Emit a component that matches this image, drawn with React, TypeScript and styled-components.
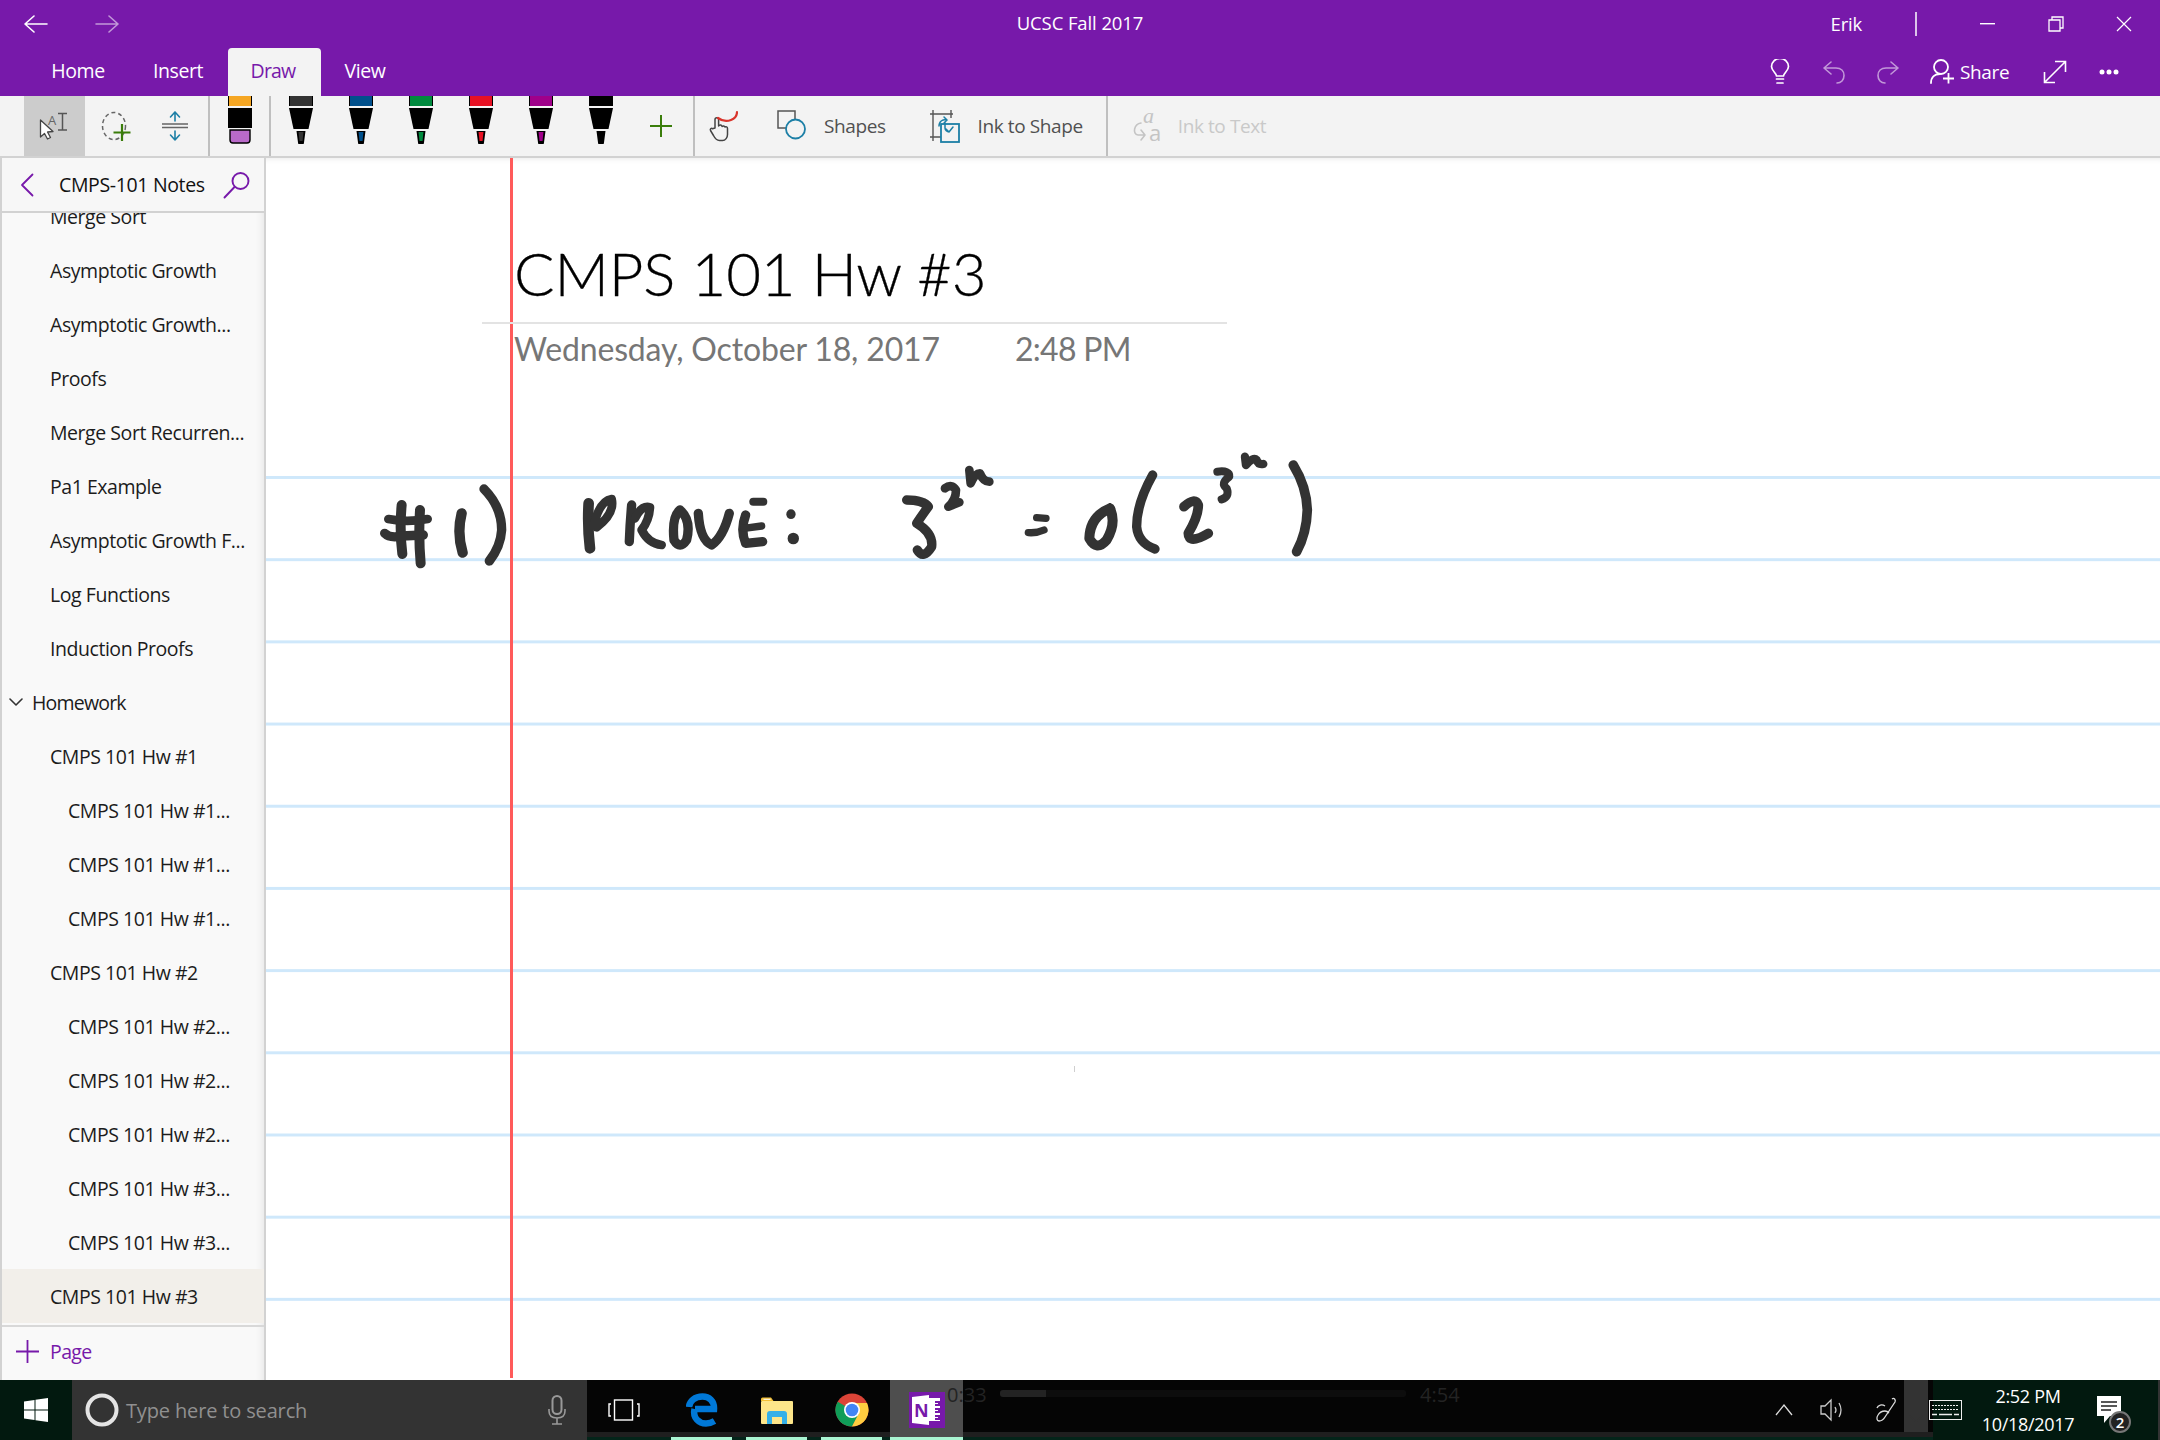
import React from "react";
import styled, { createGlobalStyle } from "styled-components";

const PURPLE = "#7719aa";
const TEAL = "#1c7fa6";
const GREEN = "#3a7d0a";
const UI_FONT = '"Open Sans", "Noto Sans", sans-serif';

const GlobalStyle = createGlobalStyle`
  html, body {
    margin: 0;
    width: 2160px;
    height: 1440px;
    overflow: hidden;
    background: #fff;
    font-family: ${UI_FONT};
  }
`;

const Page = styled.div`
  display: flex;
  flex-direction: column;
  width: 2160px;
  height: 1440px;
`;

/* ---------- title bar ---------- */

const TitleBar = styled.header`
  display: grid;
  grid-template-columns: 1fr auto 1fr;
  align-items: center;
  height: 48px;
  background: ${PURPLE};
  color: #fff;
`;

const NavArrows = styled.div`
  display: flex;
  align-items: center;
  gap: 47px;
  padding-left: 24px;
`;

const WindowTitle = styled.div`
  padding-bottom: 3px;
  font-size: 18.5px;
  letter-spacing: -0.1px;
`;

const WindowControls = styled.div`
  display: flex;
  align-items: center;
  justify-content: flex-end;
  padding-right: 2px;
`;

const UserName = styled.span`
  padding-bottom: 1px;
  font-size: 18.5px;
  letter-spacing: -0.2px;
  margin-right: 53px;
`;

const UserDivider = styled.span`
  width: 2px;
  height: 24px;
  background: #dcc4ea;
  margin-right: 37px;
`;

const CaptionButton = styled.div`
  display: flex;
  align-items: center;
  justify-content: center;
  width: 68px;
  height: 48px;
`;

/* ---------- ribbon tabs ---------- */

const TabRow = styled.nav`
  display: flex;
  justify-content: space-between;
  height: 48px;
  background: ${PURPLE};
  padding: 0 24px 0 28px;
`;

const Tabs = styled.div`
  display: flex;
`;

const Tab = styled.div<{ $active?: boolean; $width: number }>`
  display: flex;
  align-items: center;
  justify-content: center;
  box-sizing: border-box;
  width: ${(p) => p.$width}px;
  padding: 0 ${(p) => (p.$active ? 3 : 0)}px 3px 0;
  font-size: 19.5px;
  letter-spacing: ${(p) => (p.$active ? -0.8 : -0.45)}px;
  border-radius: 4px 4px 0 0;
  color: ${(p) => (p.$active ? PURPLE : "#fff")};
  background: ${(p) => (p.$active ? "#f3f3f3" : "transparent")};
`;

const TabActions = styled.div`
  display: flex;
  align-items: center;
`;

const ActionSlot = styled.div<{ $dim?: boolean }>`
  display: flex;
  align-items: center;
  justify-content: center;
  width: 54px;
  height: 48px;
  opacity: ${(p) => (p.$dim ? 0.55 : 1)};
`;

const ShareButton = styled.div`
  display: flex;
  align-items: center;
  gap: 4px;
  width: 113px;
  padding-left: 15px;
  padding-bottom: 1px;
  box-sizing: border-box;
  color: #fff;
  font-size: 19px;
  letter-spacing: -0.35px;
`;

/* ---------- draw toolbar ---------- */

const Toolbar = styled.div`
  display: flex;
  align-items: stretch;
  box-sizing: border-box;
  height: 62px;
  padding-left: 24px;
  background: #f3f3f3;
  border-bottom: 2px solid #d2d2d2;
`;

const ToolButton = styled.div<{ $selected?: boolean; $width?: number }>`
  display: flex;
  align-items: center;
  justify-content: center;
  width: ${(p) => p.$width ?? 60}px;
  background: ${(p) => (p.$selected ? "#cccccc" : "transparent")};
`;

const ToolSeparator = styled.div<{ $before?: number }>`
  width: 2px;
  margin-left: ${(p) => p.$before ?? 0}px;
  background: #bfbfbf;
`;

const PenSlot = styled.div<{ $width?: number }>`
  display: flex;
  justify-content: center;
  width: ${(p) => p.$width ?? 60}px;
`;

const LabelledTool = styled.div<{ $disabled?: boolean; $before: number; $gap: number }>`
  display: flex;
  align-items: center;
  gap: ${(p) => p.$gap}px;
  margin-left: ${(p) => p.$before}px;
  font-size: 19px;
  letter-spacing: -0.4px;
  color: ${(p) => (p.$disabled ? "#c9c9c9" : "#505050")};
`;

/* ---------- body ---------- */

const Body = styled.div`
  display: flex;
  flex: 1;
  min-height: 0;
`;

const Sidebar = styled.aside`
  display: flex;
  flex-direction: column;
  box-sizing: border-box;
  width: 266px;
  background: #f9f9f9;
  border-left: 2px solid #d2d2d2;
  border-right: 2px solid #d2d2d2;
  box-shadow: inset -8px 0 8px -8px #dedede;
`;

const SidebarHeader = styled.div`
  display: flex;
  align-items: center;
  flex: none;
  box-sizing: border-box;
  height: 55px;
  padding: 0 0 0 18px;
  background: #f7f7f7;
  border-bottom: 2px solid #d2d2d2;
`;

const NotebookName = styled.div`
  margin-left: 25px;
  width: 164px;
  font-size: 19.5px;
  letter-spacing: -0.35px;
  color: #111;
  white-space: nowrap;
`;

const PageList = styled.div`
  flex: 1;
  min-height: 0;
  overflow: hidden;
`;

const PageRows = styled.div`
  margin-top: -24px;
`;

const PageRow = styled.div<{ $level: number; $active?: boolean }>`
  display: flex;
  align-items: center;
  height: 54px;
  padding-left: ${(p) => [7, 48, 66][p.$level]}px;
  font-size: 19.5px;
  letter-spacing: -0.45px;
  color: #1c1c1c;
  white-space: nowrap;
  background: ${(p) => (p.$active ? "#f2efea" : "transparent")};
`;

const SectionLabel = styled.span`
  margin-left: 9px;
  letter-spacing: -0.8px;
`;

const SidebarFooter = styled.div`
  display: flex;
  align-items: center;
  flex: none;
  gap: 11px;
  box-sizing: border-box;
  height: 55px;
  padding: 0 0 4px 14px;
  border-top: 2px solid #d8d8d8;
  color: ${PURPLE};
  font-size: 19.5px;
  letter-spacing: -0.6px;
`;

/* ---------- note canvas ---------- */

const Canvas = styled.main`
  position: relative;
  display: flex;
  flex-direction: column;
  flex: 1;
  min-width: 0;
  padding-bottom: 2px;
  background: #fff;
  box-shadow: inset 0 6px 6px -6px #e4e4e4;
`;

const TitleArea = styled.div`
  flex: none;
  box-sizing: border-box;
  height: 318px;
  padding: 73px 0 0 216px;
`;

const NoteTitle = styled.h1`
  margin: 0;
  height: 93px;
  box-sizing: border-box;
  width: 745px;
  padding: 6px 0 0 32px;
  border-bottom: 2px solid #e3e3e3;
  position: relative;
  z-index: 2;
  font-family: Lato, sans-serif;
  font-weight: 300;
  font-size: 60px;
  line-height: 72px;
  letter-spacing: -0.12px;
  -webkit-text-stroke: 0.3px #000;
  color: #000;
`;

const NoteStamp = styled.div`
  display: flex;
  gap: 75px;
  padding: 2px 0 0 32px;
  font-family: Lato, sans-serif;
  font-size: 32px;
  line-height: 46px;
  letter-spacing: -0.15px;
  color: #767676;
`;

const StampTime = styled.span`
  letter-spacing: -0.7px;
`;

const Ruled = styled.div`
  flex: 1;
  background-image: linear-gradient(to bottom, #cfe8fb 0, #cfe8fb 3px, transparent 3px);
  background-size: 100% 82.2px;
`;

const MarginLine = styled.div`
  position: absolute;
  left: 244px;
  top: 0;
  bottom: 2px;
  width: 3px;
  background: #ff5a5a;
`;

const InkLayer = styled.svg`
  position: absolute;
  left: 104px;
  top: 292px;
  overflow: visible;
`;

const Speck = styled.div`
  position: absolute;
  left: 808px;
  top: 908px;
  width: 1px;
  height: 6px;
  background: #cfcfcf;
`;

/* ---------- taskbar ---------- */

const Taskbar = styled.footer`
  position: relative;
  display: flex;
  flex: none;
  height: 60px;
  background: linear-gradient(to bottom, #050505 0, #050505 52px, #1f1f1f 52px, #1f1f1f 57px, #04251a 57px);
`;

const StartButton = styled.div`
  display: flex;
  align-items: center;
  justify-content: center;
  width: 72px;
  background: #02190f;
`;

const SearchBox = styled.div`
  display: flex;
  align-items: center;
  box-sizing: border-box;
  width: 515px;
  padding-left: 13px;
  background: #333;
  color: #909090;
  font-size: 20px;
  letter-spacing: -0.15px;
`;

const SearchHint = styled.span`
  margin-left: 7px;
  flex: 1;
`;

const MicSlot = styled.div`
  display: flex;
  margin-right: 21px;
`;

const TaskSlot = styled.div<{ $width: number; $before?: number; $running?: boolean; $focused?: boolean }>`
  position: relative;
  display: flex;
  align-items: center;
  justify-content: center;
  width: ${(p) => p.$width}px;
  margin-left: ${(p) => p.$before ?? 0}px;
  background: ${(p) => (p.$focused ? "#4e4e4e" : "transparent")};

  &::after {
    content: "";
    display: ${(p) => (p.$running ? "block" : "none")};
    position: absolute;
    left: 0;
    right: 0;
    bottom: 0;
    height: 3px;
    background: #a9f5d2;
  }
`;

const GhostTime = styled.span<{ $left: number }>`
  position: absolute;
  left: ${(p) => p.$left}px;
  top: 1px;
  font-size: 20px;
  color: #232323;
`;

const GhostProgress = styled.div`
  position: absolute;
  left: 1000px;
  top: 10px;
  width: 406px;
  height: 7px;
  border-radius: 3px;
  background: linear-gradient(to right, #232323 46px, #0d0d0d 46px);
`;

const Tray = styled.div`
  display: flex;
  align-items: stretch;
  margin-left: auto;
`;

const TraySlot = styled.div<{ $width: number; $shift?: number }>`
  display: flex;
  align-items: center;
  justify-content: center;
  box-sizing: border-box;
  width: ${(p) => p.$width}px;
  padding-left: ${(p) => p.$shift ?? 0}px;
`;

const TrayOverflow = styled.div`
  display: flex;
  align-items: flex-end;
  justify-content: center;
  box-sizing: border-box;
  width: 24px;
  height: 52px;
  padding-bottom: 8px;
  margin-right: 5px;
  background: #333;
`;

const SystemArea = styled.div`
  display: flex;
  align-items: center;
  box-sizing: border-box;
  width: 227px;
  background: #02190f;
  border-right: 2px solid #333;
`;

const KeyboardSlot = styled.div`
  display: flex;
  margin-left: -4px;
`;

const Clock = styled.div`
  display: flex;
  flex-direction: column;
  align-items: center;
  width: 136px;
  margin-left: -2px;
  font-size: 18px;
  line-height: 28px;
  letter-spacing: -0.3px;
  color: #fff;
`;

const Badge = styled.span`
  position: absolute;
  right: 29px;
  bottom: 7px;
  display: flex;
  align-items: center;
  justify-content: center;
  width: 22px;
  height: 22px;
  border-radius: 50%;
  box-sizing: border-box;
  border: 2px solid #777;
  background: #222;
  color: #fff;
  font-size: 15px;
  font-weight: 600;
`;

/* ---------- icons ---------- */

const Line = { fill: "none", strokeLinecap: "round", strokeLinejoin: "round" } as const;

const ArrowLeft = ({ dim }: { dim?: boolean }) => (
  <svg width="24" height="20" viewBox="0 0 24 20" opacity={dim ? 0.55 : 1}>
    {dim ? (
      <path d="M1 10H23M14 2l9 8-9 8" {...Line} stroke="#fff" strokeWidth="1.6" />
    ) : (
      <path d="M23 10H1M10 2l-9 8 9 8" {...Line} stroke="#fff" strokeWidth="1.6" />
    )}
  </svg>
);

const Minimize = () => (
  <svg width="16" height="2" viewBox="0 0 16 2">
    <rect width="15" height="1.4" fill="#fff" />
  </svg>
);

const Restore = () => (
  <svg width="16" height="16" viewBox="0 0 16 16">
    <path d="M4 4V1h11v11h-3M1 4h11v11H1z" fill="none" stroke="#fff" strokeWidth="1.3" />
  </svg>
);

const Close = () => (
  <svg width="16" height="16" viewBox="0 0 16 16">
    <path d="M1 1l14 14M15 1L1 15" fill="none" stroke="#fff" strokeWidth="1.2" />
  </svg>
);

const Bulb = () => (
  <svg width="20" height="26" viewBox="0 0 20 26">
    <path d="M6.5 17c0-3-5-5-5-9.500A8.500 8 0 0 1 18.500 7.500C18.500 12 13.500 14 13.500 17z" {...Line} stroke="#fff" strokeWidth="1.7" />
    <path d="M6.500 20h7M7 24h6" {...Line} stroke="#fff" strokeWidth="1.7" />
  </svg>
);

const Undo = () => (
  <svg width="24" height="24" viewBox="0 0 24 24">
    <path d="M9 2L2 8l7 6M2 8h12c5 0 8 3 8 7.500S19 23 15 23" {...Line} stroke="#fff" strokeWidth="1.6" />
  </svg>
);

const Redo = () => (
  <svg width="24" height="24" viewBox="0 0 24 24">
    <path d="M15 2l7 6-7 6M22 8H10c-5 0-8 3-8 7.500S5 23 9 23" {...Line} stroke="#fff" strokeWidth="1.6" />
  </svg>
);

const SharePerson = () => (
  <svg width="26" height="25" viewBox="0 0 26 25">
    <circle cx="11" cy="8" r="7" fill="none" stroke="#fff" strokeWidth="1.8" />
    <path d="M1 24c0-6 4-9 9-9" {...Line} stroke="#fff" strokeWidth="1.8" />
    <path d="M13 19.500h11M18.500 14v10.500" fill="none" stroke="#fff" strokeWidth="1.8" />
  </svg>
);

const Expand = () => (
  <svg width="24" height="24" viewBox="0 0 24 24">
    <path d="M1.500 22.500L22.500 1.500M12 1.500h10.500V12M1.500 12v10.500H12" fill="none" stroke="#fff" strokeWidth="1.6" />
  </svg>
);

const Dots = () => (
  <svg width="20" height="6" viewBox="0 0 20 6">
    <circle cx="3" cy="3" r="2.500" fill="#fff" />
    <circle cx="10" cy="3" r="2.500" fill="#fff" />
    <circle cx="17" cy="3" r="2.500" fill="#fff" />
  </svg>
);

const SelectTool = () => (
  <svg width="61" height="60" viewBox="0 0 61 60">
    <text x="24" y="29" fontFamily="Open Sans, sans-serif" fontSize="13" fill="#666">A</text>
    <path d="M16.500 24v17l4-3.500 3 5.500 3-1.500-3-5.500 5.500-.5z" fill="#fff" stroke="#444" strokeWidth="1.3" strokeLinejoin="round" />
    <path d="M34 17.500h9M38.500 17.500v16.500M34 34h9" fill="none" stroke="#555" strokeWidth="1.500" />
  </svg>
);

const LassoAdd = () => (
  <svg width="60" height="60" viewBox="0 0 60 60">
    <ellipse cx="29" cy="30" rx="11.500" ry="13.500" fill="none" stroke="#666" strokeWidth="1.500" strokeDasharray="4 3" />
    <path d="M37 28v17M28.500 36.500h17" stroke={GREEN} strokeWidth="2.200" />
  </svg>
);

const InsertSpace = () => (
  <svg width="60" height="60" viewBox="0 0 60 60">
    <path d="M17 28h26M17 31.500h26" stroke="#666" strokeWidth="1.600" />
    <path d="M30 25V16M25.500 21l4.500-5 4.500 5M30 35v9M25.500 39l4.500 5 4.500-5" {...Line} stroke={TEAL} strokeWidth="1.600" />
  </svg>
);

const HighlighterPen = () => (
  <svg width="24" height="48" viewBox="0 0 24 48">
    <rect width="24" height="10" fill="#000" />
    <rect x="1" width="22" height="10" fill="#f5a623" />
    <rect y="12" width="24" height="20" fill="#000" />
    <path d="M2 34h20v10a3 3 0 0 1-3 3H5a3 3 0 0 1-3-3z" fill="#b96ac9" stroke="#000" strokeWidth="1.400" />
  </svg>
);

const Pen = ({ color }: { color: string }) => (
  <svg width="24" height="48" viewBox="0 0 24 48">
    <rect width="24" height="10" fill="#000" />
    <rect x="1" width="22" height="10" fill={color} />
    <path d="M0 12h24l-4.500 21h-15z" fill="#000" />
    <path d="M7.500 35h9l-1.500 11.500a3 2.500 0 0 1-6 0z" fill="#000" />
    <path d="M9.500 36h5l-1 9h-3z" fill={color} />
  </svg>
);

const PlusIcon = ({ color, size, weight = 2 }: { color: string; size: number; weight?: number }) => (
  <svg width={size} height={size} viewBox={`0 0 ${size} ${size}`}>
    <path d={`M${size / 2} 0V${size}M0 ${size / 2}H${size}`} stroke={color} strokeWidth={weight} />
  </svg>
);

const TouchInk = () => (
  <svg width="36" height="32" viewBox="0 0 36 32">
    <path d="M13 18V9.500a1.800 1.800 0 0 1 3.600 0V16l.5-.5a1.700 1.700 0 0 1 2.800.5l.2.500a1.700 1.700 0 0 1 2.800.5 1.700 1.700 0 0 1 2.600 1.500v6c0 3-2 6-5 6h-3c-3 0-4.500-2-6-5l-3-5c-.8-1.600 1-2.800 2-1.800z" {...Line} stroke="#444" strokeWidth="1.500" />
    <path d="M16 8c4 3 9 3.500 13 2 4-1.500 6-4 6-8" {...Line} stroke="#d9342b" strokeWidth="2.200" />
  </svg>
);

const ShapesIcon = () => (
  <svg width="30" height="32" viewBox="0 0 30 32">
    <path d="M9 18H1V1h17v8" fill="none" stroke="#555" strokeWidth="1.500" />
    <circle cx="18.500" cy="19" r="9.500" fill="#f3f3f3" stroke={TEAL} strokeWidth="1.800" />
  </svg>
);

const InkToShapeIcon = () => (
  <svg width="30" height="34" viewBox="0 0 30 34">
    <path d="M0 5h23M0 28h11M3 1v31M21 1v8" fill="none" stroke="#555" strokeWidth="1.400" />
    <rect x="11" y="15" width="18" height="18" fill="#f3f3f3" stroke={TEAL} strokeWidth="1.800" />
    <path d="M9 17c0-5 4-7 8-6M14 8l3 3-3 3M15 14v5c0 2 2 4 4 4M23 18l-4 5-3-3" {...Line} stroke={TEAL} strokeWidth="1.500" />
  </svg>
);

const InkToTextIcon = () => (
  <svg width="34" height="40" viewBox="0 0 34 40">
    <text x="15" y="17" fontFamily="Liberation Serif, serif" fontStyle="italic" fontSize="22" fill="#c4c4c4">a</text>
    <text x="21" y="35" fontFamily="Open Sans, sans-serif" fontSize="22" fill="#c4c4c4">a</text>
    <path d="M13 17C6 18 4 28 10 29H17M13 24l4 5-4 5" {...Line} stroke="#c4c4c4" strokeWidth="1.600" />
  </svg>
);

const BackChevron = () => (
  <svg width="14" height="24" viewBox="0 0 14 24">
    <path d="M12.500 1.500L2 12l10.500 10.500" {...Line} stroke={PURPLE} strokeWidth="1.800" />
  </svg>
);

const SearchGlass = () => (
  <svg width="28" height="28" viewBox="0 0 28 28">
    <circle cx="17.500" cy="10" r="8" fill="none" stroke={PURPLE} strokeWidth="1.900" />
    <path d="M11.500 16L1.500 26.500" {...Line} stroke={PURPLE} strokeWidth="1.900" />
  </svg>
);

const DownChevron = () => (
  <svg width="14" height="9" viewBox="0 0 14 9">
    <path d="M1 1l6 6 6-6" {...Line} stroke="#333" strokeWidth="1.600" />
  </svg>
);

const HandwrittenNote = () => (
  <InkLayer width="970" height="130" viewBox="370 450 970 130">
    <g transform="translate(370 450) scale(0.3333)" {...Line} stroke="#333" strokeWidth="30">
      <path d="M95 165Q88 240 97 312" />
      <path d="M150 180Q145 260 152 340" />
      <path d="M55 207Q110 218 173 207" strokeWidth="26" />
      <path d="M44 250Q60 266 95 258L160 255" strokeWidth="28" />
      <path d="M275 190Q260 250 278 308" strokeWidth="31" />
      <path d="M342 117Q395 170 395 240Q392 290 358 333" strokeWidth="28" />
      <path d="M656 160Q652 230 660 295" strokeWidth="32" />
      <path d="M672 222Q690 152 725 147Q735 190 680 232" strokeWidth="26" />
      <path d="M785 165Q780 220 778 275" strokeWidth="28" />
      <path d="M795 205Q815 165 840 172Q838 210 815 240Q835 280 875 285" strokeWidth="26" />
      <path d="M930 180Q905 200 912 270Q930 300 950 270Q965 210 930 180" strokeWidth="28" />
      <path d="M985 190Q990 270 1025 285Q1060 260 1078 190" strokeWidth="28" />
      <path d="M1150 155L1180 155" strokeWidth="24" />
      <path d="M1127 195Q1110 240 1127 280L1178 275" strokeWidth="28" />
      <path d="M1122 235L1175 228" strokeWidth="22" />
      <path d="M1263 192L1263 193" strokeWidth="28" />
      <path d="M1270 265L1270 266" strokeWidth="34" />
    </g>
    <g transform="translate(880 450) scale(0.3333)" {...Line} stroke="#333" strokeWidth="28">
      <path d="M80 150Q130 150 145 170Q130 190 110 220Q160 250 155 290Q130 330 112 300" />
      <path d="M195 115Q215 100 228 120Q228 150 205 170L238 157" strokeWidth="26" />
      <path d="M268 60L272 100Q285 70 300 70Q310 95 328 95" strokeWidth="26" />
      <path d="M470 203L498 205" strokeWidth="22" />
      <path d="M445 248Q470 250 492 240" strokeWidth="22" />
      <path d="M690 175Q630 200 628 265Q650 305 680 270Q710 220 690 175" strokeWidth="30" />
      <path d="M818 75Q770 160 770 230Q775 280 825 297" strokeWidth="28" />
      <path d="M912 170Q945 140 955 165Q955 200 925 250Q925 285 985 250" strokeWidth="29" />
      <path d="M1012 65Q1050 60 1048 80Q1020 100 1040 115Q1050 140 1025 148" strokeWidth="24" />
      <path d="M1095 20L1098 45Q1120 20 1130 30Q1135 45 1150 42" strokeWidth="25" />
      <path d="M1240 45Q1280 110 1282 180Q1280 250 1250 305" strokeWidth="29" />
    </g>
  </InkLayer>
);

const WindowsLogo = () => (
  <svg width="24" height="24" viewBox="0 0 24 24">
    <path d="M0 3.500L10.500 2v9.500H0zM11.500 1.800L24 0v11.500H11.500zM0 12.500h10.500V22L0 20.500zM11.500 12.500H24V24l-12.500-1.800z" fill="#fff" />
  </svg>
);

const CortanaRing = () => (
  <svg width="34" height="34" viewBox="0 0 34 34">
    <circle cx="17" cy="17" r="14.500" fill="none" stroke="#e4e4e4" strokeWidth="4" />
  </svg>
);

const Mic = () => (
  <svg width="18" height="30" viewBox="0 0 18 30">
    <rect x="4.500" y="1" width="9" height="18" rx="4.500" fill="none" stroke="#999" strokeWidth="2" />
    <path d="M1 14v2c0 5 3 7 8 7s8-2 8-7v-2M9 23v6M4 29h10" fill="none" stroke="#999" strokeWidth="1.600" />
  </svg>
);

const TaskView = () => (
  <svg width="32" height="22" viewBox="0 0 32 22">
    <rect x="6.500" y="1" width="18" height="20" fill="none" stroke="#fff" strokeWidth="1.400" />
    <path d="M3 5H1v12h2M29 5h2v12h-2" fill="none" stroke="#fff" strokeWidth="1.400" />
  </svg>
);

const EdgeLogo = () => (
  <svg width="32" height="34" viewBox="0 0 32 34">
    <path d="M9 16H28C28.500 8 23 3.500 16.500 3.500C9 3.500 3.500 8 3 14" fill="none" stroke="#0078d7" strokeWidth="6.500" />
    <path d="M8.500 16C6.500 25 13 30.500 20 30.500C23.500 30.500 26 29.500 28.500 28" fill="none" stroke="#0078d7" strokeWidth="6.500" />
  </svg>
);

const FolderLogo = () => (
  <svg width="32" height="27" viewBox="0 0 32 27">
    <path d="M0 2a1.500 1.500 0 0 1 1.500-1.500H10L12.500 4H0z" fill="#f2c037" />
    <rect x="2.500" y="1.800" width="7" height="1" fill="#fff" />
    <rect y="4" width="32" height="23" rx="1" fill="#fde68a" />
    <path d="M6 27V17a3 3 0 0 1 3-3h14a3 3 0 0 1 3 3v10h-5v-7h-10v7z" fill="#35b0e8" />
  </svg>
);

const ChromeLogo = () => (
  <svg width="34" height="34" viewBox="0 0 34 34">
    <circle cx="17" cy="17" r="16.500" fill="#db4437" />
    <path d="M17 17L2.700 8.700A16.500 16.500 0 0 0 17 33.500L25 19z" fill="#0f9d58" />
    <path d="M17 10H32A16.500 16.500 0 0 1 17 33.500L24 20z" fill="#ffcd40" />
    <circle cx="17" cy="17" r="8" fill="#fff" />
    <circle cx="17" cy="17" r="6.300" fill="#4285f4" />
  </svg>
);

const OneNoteLogo = () => (
  <svg width="36" height="36" viewBox="0 0 36 36">
    <rect width="36" height="36" fill={PURPLE} />
    <path d="M3 5L20 3V33L3 31z" fill="#fff" />
    <path d="M20 6H31V29H20z" fill="#fff" />
    <path d="M26 9h5v5h-5zM26 16h5v5h-5zM26 23h5v5h-5z" fill={PURPLE} />
    <path d="M26 11h3v1h-3zM26 18h3v1h-3zM26 25h3v1h-3z" fill="#fff" />
    <text x="5" y="25" fontFamily="Open Sans, sans-serif" fontWeight="700" fontSize="18" fill={PURPLE}>N</text>
  </svg>
);

const TrayChevron = () => (
  <svg width="18" height="12" viewBox="0 0 18 12">
    <path d="M1 11L9 1l8 10" fill="none" stroke="#ddd" strokeWidth="1.300" />
  </svg>
);

const Speaker = () => (
  <svg width="24" height="24" viewBox="0 0 24 24">
    <path d="M1 8h4l6-6v20l-6-6H1z" fill="none" stroke="#ccc" strokeWidth="1.300" />
    <path d="M15 9q2 3 0 6M19 5q4 7 0 14" fill="none" stroke="#ccc" strokeWidth="1.300" />
  </svg>
);

const PenTray = () => (
  <svg width="22" height="26" viewBox="0 0 22 26">
    <path d="M17 2c2-1.500 4 .5 3 3l-10 15c-1.500 2.500-4 4-6 4s-3-3-1-6c1.500-2.500 4-4 7-4 1.500 0 3 1 4 2M10 9c-3-2-7-1-8 2" fill="none" stroke="#ddd" strokeWidth="1.300" />
  </svg>
);

const Keyboard = () => (
  <svg width="33" height="20" viewBox="0 0 33 20">
    <rect x="0.500" y="0.500" width="32" height="19" fill="none" stroke="#eee" />
    <path d="M3 5.500h27M3 9.500h27" stroke="#eee" strokeDasharray="2 1" />
    <path d="M3 14.500h5M10 14.500h13M25 14.500h5" stroke="#eee" strokeWidth="1.400" />
  </svg>
);

const NotificationBubble = () => (
  <svg width="26" height="30" viewBox="0 0 26 30">
    <path d="M1 1h24v20H14l-6 7v-7H1z" fill="#fff" />
    <path d="M5 7h16M5 11h16M5 15h10" stroke="#222" strokeWidth="1.500" />
  </svg>
);

/* ---------- data ---------- */

const pages: { title: string; level: number; active?: boolean; section?: boolean }[] = [
  { title: "Merge Sort", level: 1 },
  { title: "Asymptotic Growth", level: 1 },
  { title: "Asymptotic Growth...", level: 1 },
  { title: "Proofs", level: 1 },
  { title: "Merge Sort Recurren...", level: 1 },
  { title: "Pa1 Example", level: 1 },
  { title: "Asymptotic Growth F...", level: 1 },
  { title: "Log Functions", level: 1 },
  { title: "Induction Proofs", level: 1 },
  { title: "Homework", level: 0, section: true },
  { title: "CMPS 101 Hw #1", level: 1 },
  { title: "CMPS 101 Hw #1...", level: 2 },
  { title: "CMPS 101 Hw #1...", level: 2 },
  { title: "CMPS 101 Hw #1...", level: 2 },
  { title: "CMPS 101 Hw #2", level: 1 },
  { title: "CMPS 101 Hw #2...", level: 2 },
  { title: "CMPS 101 Hw #2...", level: 2 },
  { title: "CMPS 101 Hw #2...", level: 2 },
  { title: "CMPS 101 Hw #3...", level: 2 },
  { title: "CMPS 101 Hw #3...", level: 2 },
  { title: "CMPS 101 Hw #3", level: 1, active: true },
];

const penColors = ["#333333", "#00508c", "#008a3e", "#e81123", "#a0008a", "#000000"];

export default function App() {
  return (
    <Page>
      <GlobalStyle />
      <TitleBar>
        <NavArrows>
          <ArrowLeft />
          <ArrowLeft dim />
        </NavArrows>
        <WindowTitle>UCSC Fall 2017</WindowTitle>
        <WindowControls>
          <UserName>Erik</UserName>
          <UserDivider />
          <CaptionButton><Minimize /></CaptionButton>
          <CaptionButton><Restore /></CaptionButton>
          <CaptionButton><Close /></CaptionButton>
        </WindowControls>
      </TitleBar>

      <TabRow>
        <Tabs>
          <Tab $width={100}>Home</Tab>
          <Tab $width={100}>Insert</Tab>
          <Tab $active $width={93}>Draw</Tab>
          <Tab $width={88}>View</Tab>
        </Tabs>
        <TabActions>
          <ActionSlot><Bulb /></ActionSlot>
          <ActionSlot $dim><Undo /></ActionSlot>
          <ActionSlot $dim><Redo /></ActionSlot>
          <ShareButton><SharePerson />Share</ShareButton>
          <ActionSlot><Expand /></ActionSlot>
          <ActionSlot><Dots /></ActionSlot>
        </TabActions>
      </TabRow>

      <Toolbar>
        <ToolButton $selected $width={61}><SelectTool /></ToolButton>
        <ToolButton><LassoAdd /></ToolButton>
        <ToolButton><InsertSpace /></ToolButton>
        <ToolSeparator $before={3} />
        <PenSlot $width={59}><HighlighterPen /></PenSlot>
        <ToolSeparator />
        {penColors.map((color) => (
          <PenSlot key={color}><Pen color={color} /></PenSlot>
        ))}
        <ToolButton><PlusIcon color={GREEN} size={22} /></ToolButton>
        <ToolSeparator $before={2} />
        <ToolButton $width={50}><TouchInk /></ToolButton>
        <LabelledTool $before={32} $gap={17}><ShapesIcon />Shapes</LabelledTool>
        <LabelledTool $before={44} $gap={18}><InkToShapeIcon />Ink to Shape</LabelledTool>
        <ToolSeparator $before={23} />
        <LabelledTool $disabled $before={20} $gap={16}><InkToTextIcon />Ink to Text</LabelledTool>
      </Toolbar>

      <Body>
        <Sidebar>
          <SidebarHeader>
            <BackChevron />
            <NotebookName>CMPS-101 Notes</NotebookName>
            <SearchGlass />
          </SidebarHeader>
          <PageList>
            <PageRows>
              {pages.map((page, i) => (
                <PageRow key={i} $level={page.level} $active={page.active}>
                  {page.section ? (
                    <>
                      <DownChevron />
                      <SectionLabel>{page.title}</SectionLabel>
                    </>
                  ) : (
                    page.title
                  )}
                </PageRow>
              ))}
            </PageRows>
          </PageList>
          <SidebarFooter>
            <PlusIcon color={PURPLE} size={23} weight={1.8} />
            Page
          </SidebarFooter>
        </Sidebar>

        <Canvas>
          <TitleArea>
            <NoteTitle>CMPS 101 Hw #3</NoteTitle>
            <NoteStamp>
              <span>Wednesday, October 18, 2017</span>
              <StampTime>2:48 PM</StampTime>
            </NoteStamp>
          </TitleArea>
          <Ruled />
          <MarginLine />
          <HandwrittenNote />
          <Speck />
        </Canvas>
      </Body>

      <Taskbar>
        <StartButton><WindowsLogo /></StartButton>
        <SearchBox>
          <CortanaRing />
          <SearchHint>Type here to search</SearchHint>
          <MicSlot><Mic /></MicSlot>
        </SearchBox>
        <TaskSlot $width={74}><TaskView /></TaskSlot>
        <TaskSlot $width={61} $before={10} $running><EdgeLogo /></TaskSlot>
        <TaskSlot $width={61} $before={14} $running><FolderLogo /></TaskSlot>
        <TaskSlot $width={61} $before={14} $running><ChromeLogo /></TaskSlot>
        <TaskSlot $width={73} $before={8} $running $focused><OneNoteLogo /></TaskSlot>
        <GhostTime $left={947}>0:33</GhostTime>
        <GhostProgress />
        <GhostTime $left={1420}>4:54</GhostTime>
        <Tray>
          <TraySlot $width={48}><TrayChevron /></TraySlot>
          <TraySlot $width={48}><Speaker /></TraySlot>
          <TraySlot $width={48} $shift={12}><PenTray /></TraySlot>
          <TrayOverflow><DownChevron /></TrayOverflow>
          <SystemArea>
            <KeyboardSlot><Keyboard /></KeyboardSlot>
            <Clock>
              <span>2:52 PM</span>
              <span>10/18/2017</span>
            </Clock>
            <NotificationBubble />
            <Badge>2</Badge>
          </SystemArea>
        </Tray>
      </Taskbar>
    </Page>
  );
}
